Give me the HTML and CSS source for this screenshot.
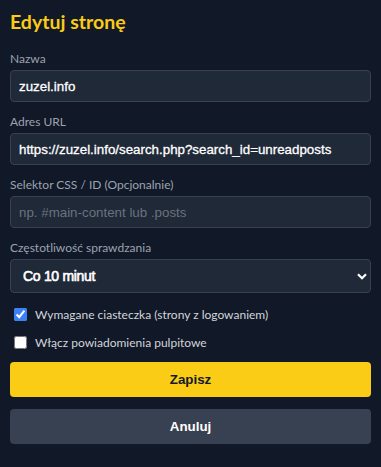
FILE: index.html
```html
<!DOCTYPE html>
<html lang="pl">
<head>
<meta charset="utf-8">
<title>Edytuj stronę</title>
<link rel="stylesheet" href="styles.css">
</head>
<body>
<h2 class="title">Edytuj stronę</h2>
<form class="form">
  <div class="field">
    <label class="label" for="name">Nazwa</label>
    <input class="input" id="name" type="text" value="zuzel.info">
  </div>
  <div class="field">
    <label class="label" for="url">Adres URL</label>
    <input class="input" id="url" type="text" value="https://zuzel.info/search.php?search_id=unreadposts">
  </div>
  <div class="field">
    <label class="label" for="sel">Selektor CSS / ID (Opcjonalnie)</label>
    <input class="input" id="sel" type="text" placeholder="np. #main-content lub .posts">
  </div>
  <div class="field field-select">
    <label class="label" for="freq">Częstotliwość sprawdzania</label>
    <div class="select-wrap">
      <select class="select" id="freq">
        <option>Co 10 minut</option>
      </select>
      <svg class="chevron" width="10" height="7" viewBox="0 0 10 7"><path d="M1 1.2 L5 5.2 L9 1.2" fill="none" stroke="#ffffff" stroke-width="2.2"/></svg>
    </div>
  </div>
  <label class="check"><input type="checkbox" checked><span>Wymagane ciasteczka (strony z logowaniem)</span></label>
  <label class="check"><input type="checkbox"><span>Włącz powiadomienia pulpitowe</span></label>
  <button type="button" class="btn btn-save">Zapisz</button>
  <button type="button" class="btn btn-cancel">Anuluj</button>
</form>
</body>
</html>
```
FILE: styles.css
```css
html, body {
  margin: 0;
  background: #111827;
}
body {
  padding: 10px;
  font-family: Lato, "Open Sans", sans-serif;
  color: #e5e7eb;
}
.title {
  margin: 0;
  font-size: 19.5px;
  line-height: 24px;
  font-weight: 700;
  color: #facc15;
}
.form {
  margin-top: 16px;
  display: flex;
  flex-direction: column;
}
.field {
  display: flex;
  flex-direction: column;
  margin-bottom: 11px;
}
.label {
  font-size: 12px;
  line-height: 17px;
  color: #9ca3af;
  margin-bottom: 3px;
}
.input, .select {
  box-sizing: border-box;
  width: 100%;
  height: 32px;
  margin: 0;
  padding: 0 8px;
  background: #1f2937;
  border: 1px solid #374151;
  border-radius: 4px;
  color: #ffffff;
  font-family: "Liberation Sans", Arial, sans-serif;
  font-size: 13.333px;
  -webkit-text-stroke: 0.3px #ffffff;
  outline: none;
}
.input::placeholder {
  color: #6b7280;
  -webkit-text-stroke: 0;
}
.select-wrap {
  position: relative;
}
.select {
  height: 34px;
  padding-left: 12px;
  appearance: none;
  -webkit-appearance: none;
  font-size: 14px;
  letter-spacing: -0.3px;
  -webkit-text-stroke: 0.6px #ffffff;
}
.chevron {
  position: absolute;
  right: 4px;
  top: 14px;
  pointer-events: none;
}
.check {
  display: flex;
  align-items: center;
  height: 20px;
  margin-bottom: 8px;
  font-size: 12px;
  color: #d1d5db;
}
.check input {
  margin: 0 8px 0 4px;
  width: 13px;
  height: 13px;
  accent-color: #3b82f6;
}
.btn {
  height: 35px;
  border: 0;
  border-radius: 4px;
  font-family: "Liberation Sans", Arial, sans-serif;
  font-size: 13.333px;
  font-weight: 700;
  cursor: pointer;
}
.btn-save {
  margin-top: 2px;
  background: #facc15;
  color: #111827;
}
.btn-cancel {
  margin-top: 12px;
  background: #374151;
  color: #ffffff;
}
```
